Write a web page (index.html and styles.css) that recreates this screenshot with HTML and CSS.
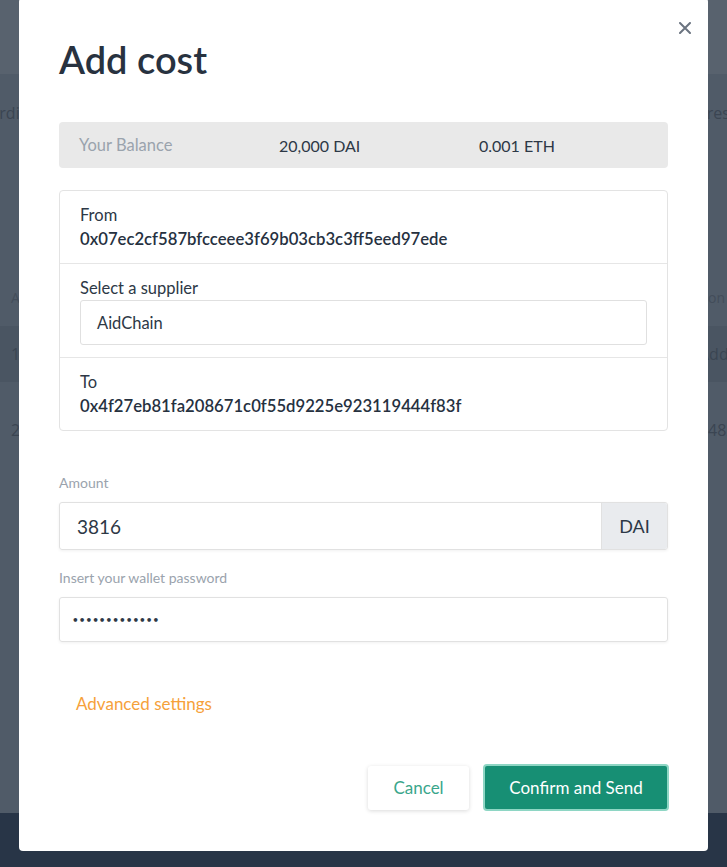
FILE: index.html
```html
<!DOCTYPE html>
<html lang="en">
<head>
<meta charset="utf-8">
<title>Add cost</title>
<link rel="stylesheet" href="styles.css">
</head>
<body>
<div class="page">
  <div class="page-top"></div>
  <div class="page-main">
    <div class="bg-row bg-head"><span class="bg-left shift">Coordinator</span><span class="bg-right r-head">Address</span></div>
    <div class="bg-spacer"></div>
    <div class="bg-row bg-th"><span class="bg-left">Amount</span><span class="bg-right r-th">Description</span></div>
    <div class="bg-row bg-r1"><span class="bg-left">1</span><span class="bg-right r-1">Added</span></div>
    <div class="bg-row bg-r2"><span class="bg-left">2</span><span class="bg-right r-2">482</span></div>
  </div>
  <div class="page-footer"></div>
</div>

<div class="modal">
  <button class="close" aria-label="Close">
    <svg width="12" height="12" viewBox="0 0 12 12"><path d="M1 1 L11 11 M11 1 L1 11" stroke="#6b7480" stroke-width="2" stroke-linecap="round"/></svg>
  </button>
  <h1 class="title">Add cost</h1>

  <div class="balance">
    <span class="bal-label">Your Balance</span>
    <span class="bal-val">20,000 DAI</span>
    <span class="bal-val">0.001 ETH</span>
  </div>

  <div class="transfer">
    <div class="t-row">
      <div class="t-label">From</div>
      <div class="t-addr">0x07ec2cf587bfcceee3f69b03cb3c3ff5eed97ede</div>
    </div>
    <div class="t-row">
      <div class="t-label">Select a supplier</div>
      <div class="select">AidChain</div>
    </div>
    <div class="t-row">
      <div class="t-label">To</div>
      <div class="t-addr">0x4f27eb81fa208671c0f55d9225e923119444f83f</div>
    </div>
  </div>

  <div class="field-label amount-label">Amount</div>
  <div class="input-group">
    <div class="input amount">3816</div>
    <div class="addon">DAI</div>
  </div>

  <div class="field-label pw-label">Insert your wallet password</div>
  <div class="input password">&#8226;&#8226;&#8226;&#8226;&#8226;&#8226;&#8226;&#8226;&#8226;&#8226;&#8226;&#8226;&#8226;</div>

  <div class="advanced">Advanced settings</div>

  <div class="actions">
    <button class="btn btn-cancel">Cancel</button>
    <button class="btn btn-confirm">Confirm and Send</button>
  </div>
</div>
</body>
</html>
```

FILE: styles.css
```css
* { box-sizing: border-box; }
html, body { margin: 0; padding: 0; }
body {
  font-family: Lato, "Open Sans", sans-serif;
  background: #505b68;
  width: 727px;
  height: 867px;
  overflow: hidden;
}

.page {
  display: flex;
  flex-direction: column;
  height: 867px;
}
.page-top {
  height: 74px;
  background: #58626e;
}
.page-main {
  flex: 1;
  background: #505b68;
  display: flex;
  flex-direction: column;
}
.bg-row {
  display: flex;
  justify-content: space-between;
  align-items: center;
  color: #3b4552;
  font-size: 16px;
  font-family: "Open Sans", sans-serif;
  white-space: nowrap;
}
.bg-head { height: 78px; }
.bg-spacer { height: 116px; }
.bg-th { height: 58px; font-size: 14px; color: #434d5a; }
.bg-r1 { height: 56px; background: #4a5562; }
.bg-r2 { height: 96px; }
.bg-left { margin-left: 11px; }
.bg-left.shift { margin-left: -30px; }
.bg-right { overflow: visible; }
.r-head { width: 50px; }
.r-th { margin-right: 2px; }
.r-1 { width: 28px; }
.r-2 { width: 19px; }
.page-footer {
  height: 54px;
  background: #283547;
}

.modal {
  position: absolute;
  left: 19px;
  top: -2px;
  width: 689px;
  height: 853px;
  background: #fff;
  border-radius: 4px;
  padding: 38px 40px 40px;
  display: flex;
  flex-direction: column;
}
.close {
  position: absolute;
  right: 17px;
  top: 24px;
  border: 0;
  background: none;
  padding: 0;
  width: 12px;
  height: 12px;
  display: flex;
}
.title {
  margin: 0;
  font-size: 38px;
  line-height: 46px;
  font-weight: 600;
  color: #28323f;
}
.balance {
  margin-top: 40px;
  height: 46px;
  background: #e9e9e9;
  border-radius: 4px;
  display: grid;
  grid-template-columns: 200px 200px 1fr;
  align-items: center;
  padding: 0 20px;
  font-size: 16px;
}
.bal-label { color: #9aa3ad; font-size: 16.5px; }
.bal-val { color: #2d3846; }

.transfer {
  margin-top: 22px;
  border: 1px solid #e3e3e3;
  border-radius: 4px;
  display: flex;
  flex-direction: column;
}
.t-row {
  padding: 12px 20px;
  border-top: 1px solid #e6e6e6;
}
.t-row:first-child { border-top: 0; }
.t-label {
  font-size: 16.5px;
  line-height: 24px;
  color: #2d3846;
}
.t-addr {
  font-size: 16.7px;
  line-height: 24px;
  font-weight: 600;
  color: #26313f;
}
.select {
  height: 45px;
  border: 1px solid #e0e0e0;
  border-radius: 3px;
  display: flex;
  align-items: center;
  padding: 0 16px;
  font-size: 16.5px;
  color: #2d3846;
}

.field-label {
  font-size: 14px;
  line-height: 18px;
  color: #9aa3ad;
}
.amount-label { margin-top: 43px; }
.pw-label { margin-top: 19px; }
.input-group {
  margin-top: 10px;
  display: flex;
  height: 48px;
  border: 1px solid #e1e1e1;
  border-radius: 3px;
  box-shadow: 0 1px 3px rgba(0,0,0,0.06);
  overflow: hidden;
}
.input {
  display: flex;
  align-items: center;
  color: #2d3846;
}
.amount {
  flex: 1;
  padding: 0 17px;
  font-size: 19px;
}
.addon {
  width: 66px;
  background: #e9ebee;
  border-left: 1px solid #e1e1e1;
  display: flex;
  align-items: center;
  justify-content: center;
  font-size: 18px;
  color: #2d3846;
}
.password {
  margin-top: 10px;
  height: 45px;
  border: 1px solid #e1e1e1;
  border-radius: 3px;
  box-shadow: 0 1px 3px rgba(0,0,0,0.06);
  padding: 0 12px;
  font-size: 10.5px;
  font-weight: bold;
  font-family: "DejaVu Sans", sans-serif;
}
.advanced {
  margin-top: 52px;
  margin-left: 17px;
  font-size: 17px;
  line-height: 20px;
  color: #f6a13a;
}
.actions {
  margin-top: auto;
  margin-right: -1px;
  display: flex;
  justify-content: flex-end;
  align-items: center;
  gap: 14px;
}
.btn {
  font-family: Lato, "Open Sans", sans-serif;
  font-size: 17px;
  border-radius: 3px;
  cursor: pointer;
}
.btn-cancel {
  width: 101px;
  height: 44px;
  background: #fff;
  border: 0;
  color: #3aa68b;
  box-shadow: 0 1px 4px rgba(0,0,0,0.15);
}
.btn-confirm {
  width: 186px;
  height: 47px;
  background: #178f74;
  color: #fff;
  border: 2px solid #8ed6c4;
  border-radius: 4px;
}
```
